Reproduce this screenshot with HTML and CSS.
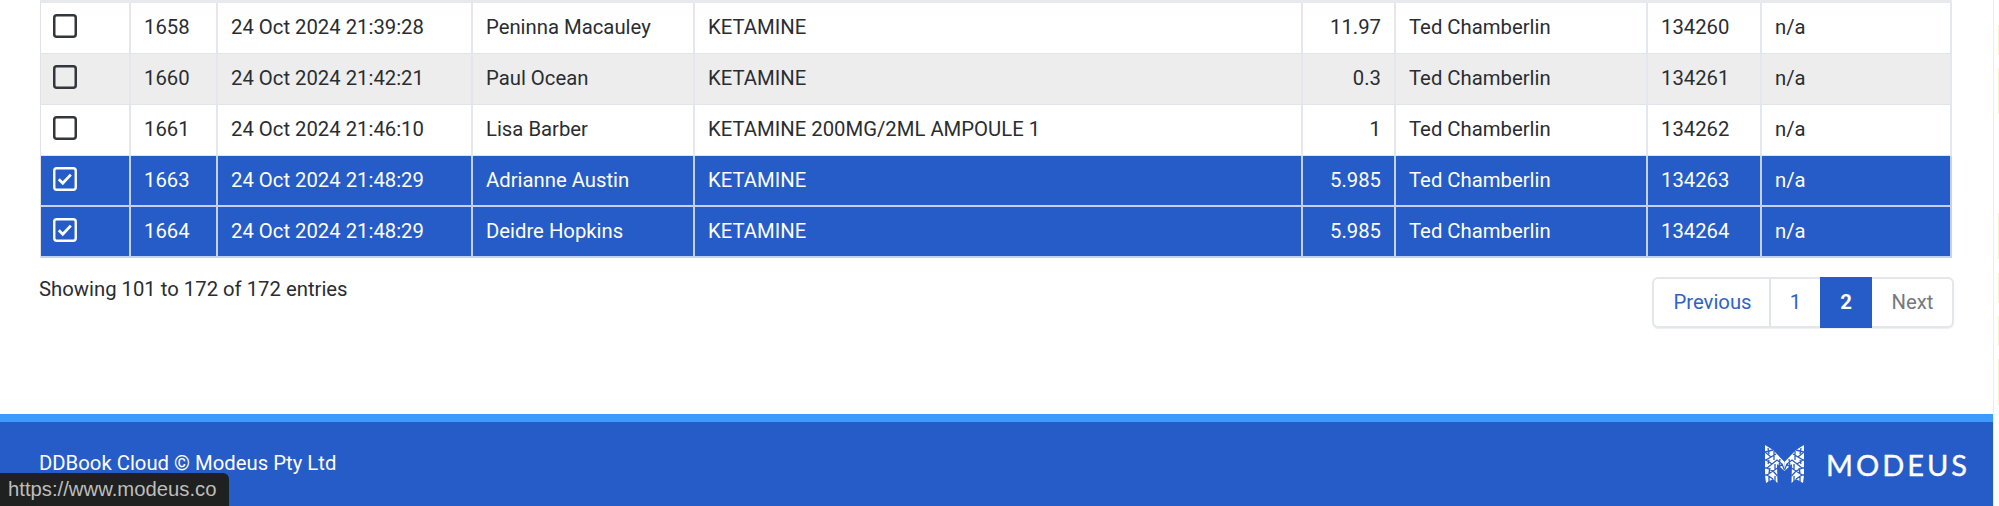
FILE: index.html
```html
<!DOCTYPE html>
<html lang="en">
<head>
<meta charset="utf-8">
<title>DDBook Cloud</title>
<link rel="stylesheet" href="styles.css">
</head>
<body>
<svg class="defs" width="0" height="0" aria-hidden="true">
  <defs>
    <symbol id="box-empty" viewBox="0 0 24 24"><rect x="1.25" y="1.25" width="21.5" height="21.5" rx="2.5" fill="none" stroke="currentColor" stroke-width="2.5"/></symbol>
    <symbol id="box-checked" viewBox="0 0 24 24"><rect x="1.25" y="1.25" width="21.5" height="21.5" rx="2.5" fill="none" stroke="currentColor" stroke-width="2.4"/><path d="M5.8 12.2l4 4 8-8.6" fill="none" stroke="currentColor" stroke-width="2.8"/></symbol>
    <g id="m-half">
      <path fill="#fff" d="M0 0L8 5 19.5 17V26L12 19 12.5 38 8 34 1 38 0 30z"/>
      <path fill="none" stroke="#265cc8" stroke-width="1.3" d="M0 7L8 5M0 7L6 12 11 9M6 12L1 15 7 19 12 15 17 19 13 23M7 19L2 23 8 26 12.5 23M8 26L2 30 8 34M8 26L12.5 31M17 19L19.5 25M0 15L1 15M0 23L2 23M0 30L2 30M3 3L4 9M9 6L9 15M3 19L4 15M10 19L10 25M5 23L4 28M10 31L10 37M4 32L4 38M15 14L14 21"/>
    </g>
  </defs>
</svg>
<div class="page">
  <main class="main">
    <section class="content">
      <table class="entries">
        <colgroup>
          <col class="c-check"><col class="c-id"><col class="c-date"><col class="c-name"><col class="c-drug"><col class="c-qty"><col class="c-user"><col class="c-ref"><col class="c-note">
        </colgroup>
        <tbody>
          <tr>
            <td class="check"><svg class="box"><use href="#box-empty"/></svg></td>
            <td>1658</td><td>24 Oct 2024 21:39:28</td><td>Peninna Macauley</td><td>KETAMINE</td><td class="num">11.97</td><td>Ted Chamberlin</td><td>134260</td><td>n/a</td>
          </tr>
          <tr class="alt">
            <td class="check"><svg class="box"><use href="#box-empty"/></svg></td>
            <td>1660</td><td>24 Oct 2024 21:42:21</td><td>Paul Ocean</td><td>KETAMINE</td><td class="num">0.3</td><td>Ted Chamberlin</td><td>134261</td><td>n/a</td>
          </tr>
          <tr>
            <td class="check"><svg class="box"><use href="#box-empty"/></svg></td>
            <td>1661</td><td>24 Oct 2024 21:46:10</td><td>Lisa Barber</td><td>KETAMINE 200MG/2ML AMPOULE 1</td><td class="num">1</td><td>Ted Chamberlin</td><td>134262</td><td>n/a</td>
          </tr>
          <tr class="selected">
            <td class="check"><svg class="box"><use href="#box-checked"/></svg></td>
            <td>1663</td><td>24 Oct 2024 21:48:29</td><td>Adrianne Austin</td><td>KETAMINE</td><td class="num">5.985</td><td>Ted Chamberlin</td><td>134263</td><td>n/a</td>
          </tr>
          <tr class="selected">
            <td class="check"><svg class="box"><use href="#box-checked"/></svg></td>
            <td>1664</td><td>24 Oct 2024 21:48:29</td><td>Deidre Hopkins</td><td>KETAMINE</td><td class="num">5.985</td><td>Ted Chamberlin</td><td>134264</td><td>n/a</td>
          </tr>
        </tbody>
      </table>
      <div class="table-foot">
        <div class="info">Showing 101 to 172 of 172 entries</div>
        <nav class="pager">
          <a class="pg pg-prev">Previous</a>
          <a class="pg pg-one">1</a>
          <a class="pg pg-active">2</a>
          <a class="pg pg-next">Next</a>
        </nav>
      </div>
    </section>
    <footer class="footer">
      <span class="copy">DDBook Cloud © Modeus Pty Ltd</span>
      <div class="brand">
        <svg class="mark" viewBox="0 0 39 38" aria-hidden="true">
          <use href="#m-half"/>
          <use href="#m-half" transform="matrix(-1 0 0 1 39 0)"/>
        </svg>
        <span class="wordmark">MODEUS</span>
      </div>
    </footer>
    <div class="status">https://www.modeus.co</div>
  </main>
  <aside class="strip">
    <i class="bar b1"></i><i class="bar b2"></i><i class="bar b3"></i><i class="bar b4"></i><i class="bar b5"></i><i class="bar b6"></i>
  </aside>
</div>
</body>
</html>
```
FILE: styles.css
```css
* { box-sizing: border-box; }
html, body { margin: 0; padding: 0; background: #fff; }
body { font-family: Roboto, "Liberation Sans", sans-serif; font-size: 20.3px; color: #2a2d30; overflow: hidden; }
.defs { position: absolute; }

.page { display: flex; width: 1999px; height: 506px; }
.main { position: relative; width: 1994px; height: 506px; display: flex; flex-direction: column; border-right: 1px solid #e8eef8; }
.content { padding: 0 0 0 40px; flex: 1; }

.entries { table-layout: fixed; width: 1911px; border-collapse: separate; border-spacing: 0; border-top: 3px solid #e7e9ec; border-left: 1px solid #dfe3e8; }
.c-check { width: 90px; }
.c-id { width: 87px; }
.c-date { width: 255px; }
.c-name { width: 222px; }
.c-drug { width: 608px; }
.c-qty { width: 93px; }
.c-user { width: 252px; }
.c-ref { width: 114px; }
.c-note { width: 190px; }

.entries td { height: 51px; padding: 0 13px 2px; border-right: 2px solid #e4e7ec; border-bottom: 1px solid #e1e4e8; white-space: nowrap; vertical-align: middle; }
.entries td.num { text-align: right; }
.entries td.check { padding: 0 0 0 12px; vertical-align: top; line-height: 0; color: #33363a; }
.box { width: 24px; height: 24px; margin-top: 11px; display: block; }
.alt td { background: #ededee; }
.selected td { background: #265cc8; color: #fff; border-right-color: #c5d2ee; border-bottom: 2px solid #c5d2ee; }
.entries .selected td.check { color: #fff; }

.table-foot { display: flex; justify-content: space-between; align-items: flex-start; width: 1914px; padding-top: 19px; }
.info { line-height: 24px; margin-left: -1px; }
.pager { display: flex; height: 51px; border: 2px solid #e4e6ea; border-radius: 6px; box-shadow: 0 1px 1px #eceef0; }
.pg { display: flex; align-items: center; justify-content: center; padding-bottom: 2px; }
.pg-prev { width: 117px; color: #2f62c9; border-right: 2px solid #dfe4ea; padding-left: 2px; }
.pg-one { width: 49px; color: #2f62c9; }
.pg-active { width: 52px; background: #265cc8; color: #fff; font-weight: 700; margin: -2px 0; }
.pg-next { width: 80px; color: #75797d; padding-left: 1px; }

.footer { height: 92px; background: #265cc8; border-top: 8px solid #3d9bff; color: #fff; display: flex; align-items: center; justify-content: space-between; padding: 0 23px 0 39px; }
.copy { position: relative; top: -1px; }
.brand { display: flex; align-items: center; gap: 22px; }
.mark { width: 39px; height: 38px; display: block; }
.wordmark { font-family: Lato, sans-serif; font-size: 29px; line-height: 1; letter-spacing: 3px; font-weight: 400; -webkit-text-stroke: 0.4px #fff; }

.status { position: absolute; left: 0; bottom: 0; width: 229px; height: 33px; background: #1f2120; color: #bdbdbd; border-top-right-radius: 6px; font-family: "Liberation Sans", sans-serif; font-size: 20.3px; line-height: 33px; padding-left: 8px; white-space: nowrap; }

.strip { flex: 1; display: flex; flex-direction: column; align-items: flex-end; padding-top: 25px; }
.bar { display: block; width: 1px; background: #fbf3d3; }
.b1 { height: 30px; }
.b2 { height: 46px; margin-top: 13px; }
.b3 { height: 46px; margin-top: 99px; }
.b4 { height: 30px; margin-top: 14px; }
.b5 { height: 30px; margin-top: 13px; }
.b6 { height: 46px; margin-top: 13px; }
```
